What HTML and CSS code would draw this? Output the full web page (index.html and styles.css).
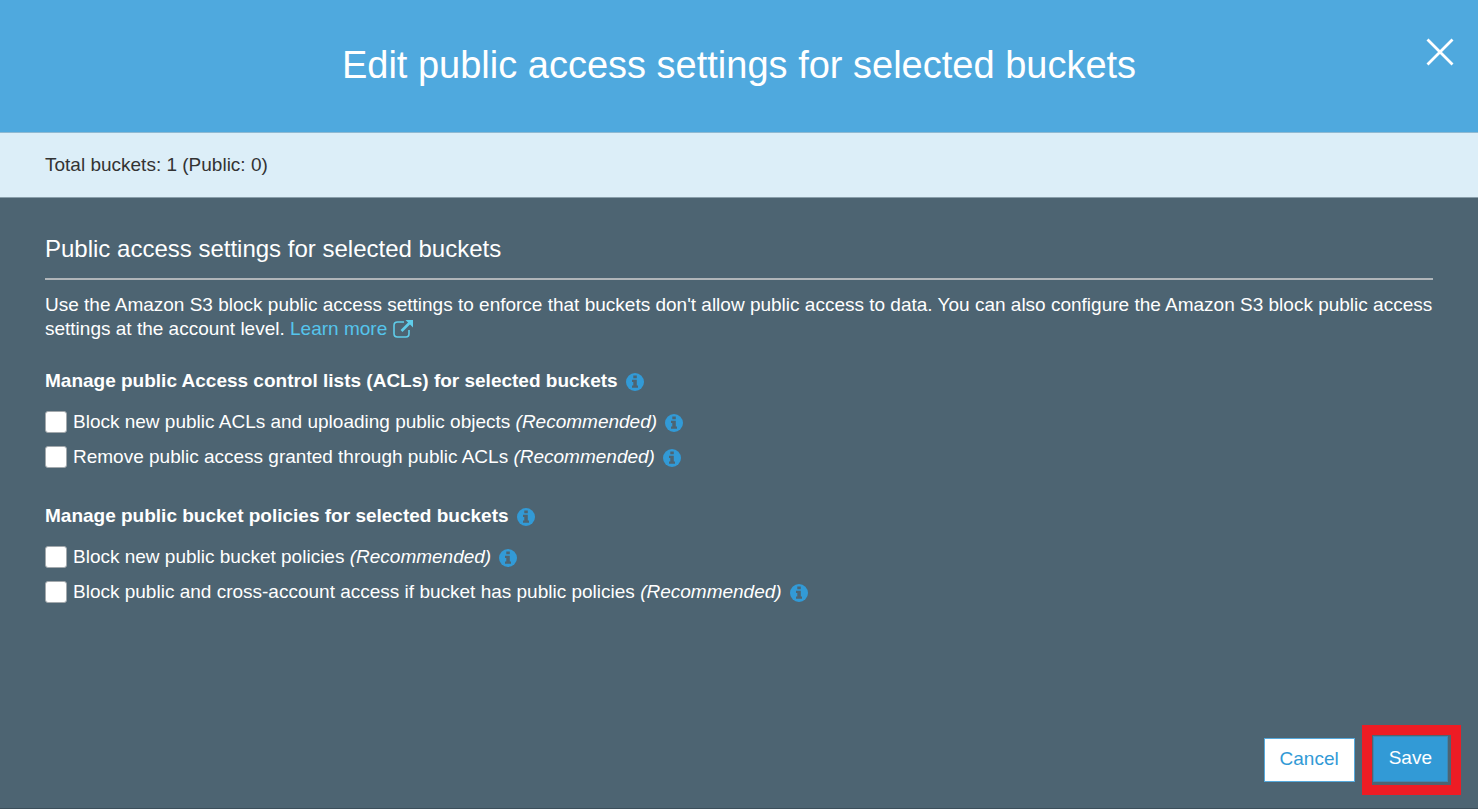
FILE: index.html
```html
<!DOCTYPE html>
<html lang="en">
<head>
<meta charset="utf-8">
<title>Edit public access settings for selected buckets</title>
<link rel="stylesheet" href="styles.css">
</head>
<body>
<svg class="sprite" aria-hidden="true">
  <symbol id="info" viewBox="0 0 18 18">
    <circle cx="9" cy="9" r="9" fill="#329ad6"/>
    <path d="M7.300 2.500h3.500v2.800H7.300zM6 6.800h4.800v5.700H12v2.200H6v-2.200h1.300V9H6z" fill="#4d6472"/>
  </symbol>
</svg>
<main class="dialog">
  <header class="dialog-header">
    <h1 class="title">Edit public access settings for selected buckets</h1>
    <button class="close" type="button" aria-label="Close">
      <svg class="close-icon" viewBox="0 0 28 28"><path d="M1.500 1.500l25 25M26.500 1.500l-25 25" stroke="#fff" stroke-width="2.800" fill="none"/></svg>
    </button>
  </header>
  <div class="summary">Total buckets: 1 (Public: 0)</div>
  <form class="content">
    <h2 class="section-title">Public access settings for selected buckets</h2>
    <p class="intro">Use the Amazon S3 block public access settings to enforce that buckets don't allow public access to data. You can also configure the Amazon S3 block public access settings at the account level. <a class="link" href="#">Learn more <svg class="external-icon" viewBox="0 0 20 18"><path d="M11 2H4.500Q1 2 1 5.500v8Q1 17 4.500 17h8.500q3 0 3-3.500V10" fill="none" stroke="#5fcdea" stroke-width="1.600"/><path d="M8.500 11L16.500 3" fill="none" stroke="#5fcdea" stroke-width="2.600"/><path d="M12.500 0H20v7.500z" fill="#5fcdea"/></svg></a></p>
    <section class="group">
      <h3 class="group-title">Manage public Access control lists (ACLs) for selected buckets <svg class="info"><use href="#info"/></svg></h3>
      <div class="option"><input class="box" type="checkbox" id="block-acls"><label for="block-acls">Block new public ACLs and uploading public objects <em>(Recommended)</em></label><svg class="info"><use href="#info"/></svg></div>
      <div class="option"><input class="box" type="checkbox" id="remove-acls"><label for="remove-acls">Remove public access granted through public ACLs <em>(Recommended)</em></label><svg class="info"><use href="#info"/></svg></div>
    </section>
    <section class="group">
      <h3 class="group-title">Manage public bucket policies for selected buckets <svg class="info"><use href="#info"/></svg></h3>
      <div class="option"><input class="box" type="checkbox" id="block-policies"><label for="block-policies">Block new public bucket policies <em>(Recommended)</em></label><svg class="info"><use href="#info"/></svg></div>
      <div class="option"><input class="box" type="checkbox" id="block-cross"><label for="block-cross">Block public and cross-account access if bucket has public policies <em>(Recommended)</em></label><svg class="info"><use href="#info"/></svg></div>
    </section>
  </form>
  <footer class="actions">
    <button class="btn btn-cancel" type="button">Cancel</button>
    <div class="highlight"><button class="btn btn-save" type="button">Save</button></div>
  </footer>
</main>
</body>
</html>
```

FILE: styles.css
```css
* { box-sizing: border-box; }
body {
  margin: 0;
  background: #4d6472;
  color: #fff;
  font-family: "Liberation Sans", Arial, sans-serif;
  font-size: 19px;
  line-height: 24px;
}
h1, h2, h3, p { margin: 0; }
.sprite { position: absolute; width: 0; height: 0; }
.dialog {
  display: flex;
  flex-direction: column;
  min-height: 100vh;
  border-bottom: 1px solid #3c4f5b;
}
.dialog-header {
  position: relative;
  padding: 41px 80px 43px;
  background: #4fa9de;
  border-bottom: 1px solid #8fb9d2;
  text-align: center;
}
.title { font-size: 38px; font-weight: 400; line-height: 48px; }
.close {
  position: absolute;
  top: 38px;
  right: 24px;
  padding: 0;
  border: 0;
  background: none;
  cursor: pointer;
}
.close-icon { display: block; width: 28px; height: 28px; }
.summary {
  padding: 20px 45px;
  background: #dceef8;
  border-bottom: 1px solid #8a9fab;
  color: #333;
}
.content { flex: 1; padding: 35px 45px 0; }
.section-title {
  padding-bottom: 13px;
  border-bottom: 2px solid #b0b5b9;
  font-size: 24px;
  font-weight: 400;
  line-height: 32px;
}
.intro { padding-top: 13px; }
.link { color: #55c5ec; text-decoration: none; }
.external-icon { width: 20px; height: 18px; vertical-align: -3px; }
.group { padding-top: 28px; }
.group + .group { padding-top: 30px; }
.group-title { margin-bottom: 11px; font-size: 19px; line-height: 24px; }
.info { flex: none; width: 18px; height: 18px; margin-left: 3px; vertical-align: -4px; }
.option { display: flex; align-items: center; height: 35px; }
.option .info { margin: 2px 0 0 8px; }
.box {
  appearance: none;
  width: 22px;
  height: 22px;
  margin: 0 6px 0 0;
  border: 1px solid #a3a9ad;
  border-radius: 3px;
  background: #fff;
}
.box:checked { background: #329ad6; }
.actions {
  display: flex;
  align-items: center;
  justify-content: flex-end;
  gap: 7px;
  padding: 0 17px 13px;
}
.highlight {
  padding: 1px 3px 3px 1px;
  border: 10px solid #ed1c24;
  background: #4d6472;
}
.btn {
  display: block;
  height: 46px;
  padding: 0 15px 2px;
  border: 1px solid #55a9dc;
  font: inherit;
  cursor: pointer;
}
.btn-cancel { height: 44px; background: #fff; color: #329ad6; }
.btn-save { border-color: #3f87b3; background: #329ad6; color: #fff; }
```
